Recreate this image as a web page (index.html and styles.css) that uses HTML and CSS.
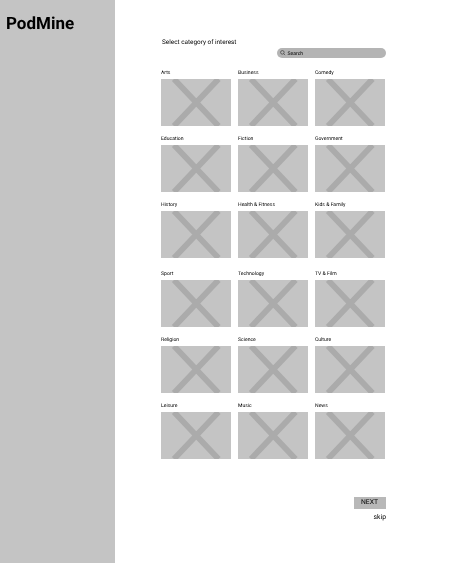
FILE: index.html
```html
<!DOCTYPE html>
<html lang="en">
<head>
<meta charset="utf-8">
<title>PodMine</title>
<link rel="stylesheet" href="styles.css">
</head>
<body>
<svg class="defs" width="0" height="0" aria-hidden="true"><defs>
<symbol id="ph" viewBox="0 0 70 47"><rect width="70" height="47" fill="#c4c4c4"/><path d="M13 0 57.500 47M57.500 0 13 47" stroke="#ababab" stroke-width="5.800" fill="none"/></symbol>
</defs></svg>
<div class="app">
  <aside class="sidebar"><h1 class="logo">PodMine</h1></aside>
  <main class="main">
    <p class="title">Select category of interest</p>
    <div class="search">
      <svg class="search-icon" viewBox="0 0 10 10"><circle cx="4.300" cy="4.300" r="3.300" fill="none" stroke="#222" stroke-width="1"/><path d="M6.700 6.700 9.300 9.300" stroke="#222" stroke-width="1"/></svg>
      <span class="search-label">Search</span>
    </div>
    <div class="grid">
      <section class="card"><h2>Arts</h2><svg class="thumb"><use href="#ph"/></svg></section>
      <section class="card"><h2>Business</h2><svg class="thumb"><use href="#ph"/></svg></section>
      <section class="card"><h2>Comedy</h2><svg class="thumb"><use href="#ph"/></svg></section>
      <section class="card"><h2>Education</h2><svg class="thumb"><use href="#ph"/></svg></section>
      <section class="card"><h2>Fiction</h2><svg class="thumb"><use href="#ph"/></svg></section>
      <section class="card"><h2>Government</h2><svg class="thumb"><use href="#ph"/></svg></section>
      <section class="card"><h2>History</h2><svg class="thumb"><use href="#ph"/></svg></section>
      <section class="card"><h2>Health &amp; Fitness</h2><svg class="thumb"><use href="#ph"/></svg></section>
      <section class="card"><h2>Kids &amp; Family</h2><svg class="thumb"><use href="#ph"/></svg></section>
    </div>
    <div class="grid grid-lower">
      <section class="card"><h2>Sport</h2><svg class="thumb"><use href="#ph"/></svg></section>
      <section class="card"><h2>Technology</h2><svg class="thumb"><use href="#ph"/></svg></section>
      <section class="card"><h2>TV &amp; Film</h2><svg class="thumb"><use href="#ph"/></svg></section>
      <section class="card"><h2>Religion</h2><svg class="thumb"><use href="#ph"/></svg></section>
      <section class="card"><h2>Science</h2><svg class="thumb"><use href="#ph"/></svg></section>
      <section class="card"><h2>Culture</h2><svg class="thumb"><use href="#ph"/></svg></section>
      <section class="card"><h2>Leisure</h2><svg class="thumb"><use href="#ph"/></svg></section>
      <section class="card"><h2>Music</h2><svg class="thumb"><use href="#ph"/></svg></section>
      <section class="card"><h2>News</h2><svg class="thumb"><use href="#ph"/></svg></section>
    </div>
    <div class="actions">
      <div class="next">NEXT</div>
      <div class="skip">skip</div>
    </div>
  </main>
</div>
</body>
</html>
```
FILE: styles.css
```css
* { box-sizing: border-box; }
html, body { margin: 0; height: 100%; background: #fff; overflow: hidden; }
body { font-family: Roboto, "Liberation Sans", sans-serif; color: #000; text-rendering: geometricPrecision; }
.defs { position: absolute; }
.app { display: flex; width: 469px; height: 563px; filter: grayscale(1); }
.sidebar { width: 115px; flex: none; background: #c4c4c4; padding: 14px 6px; }
.logo { margin: 0; font-size: 17px; line-height: 20px; font-weight: 700; }
.main { width: 271px; margin-left: 46px; padding-top: 37px; display: flex; flex-direction: column; }
.title { margin: 0 0 0 1px; font-size: 6.400px; line-height: 10px; color: #000; }
.search { margin: 1px 0 0 116px; width: 109px; height: 9.500px; border-radius: 5px; background: #b4b4b4; display: flex; align-items: center; gap: 2px; padding-left: 3px; font-size: 5.100px; color: #000; }
.search-icon { width: 5.500px; height: 5.500px; flex: none; }
.search-label { padding-top: 2px; }
.grid { margin-top: 8.500px; display: grid; grid-template-columns: repeat(3, 70px); column-gap: 7px; row-gap: 6px; }
.grid-lower { margin-top: 8.800px; }
.card { display: flex; flex-direction: column; }
.card h2 { margin: 0; padding-top: 1px; font-size: 5.100px; line-height: 12px; font-weight: 400; color: #000; }
.thumb { display: block; width: 70px; height: 47px; }
.actions { margin-top: 38.500px; display: flex; flex-direction: column; align-items: flex-end; width: 225px; }
.next { width: 32px; height: 11.500px; background: #b8b8b8; font-size: 6.800px; line-height: 11.500px; padding-left: 7px; color: #000; }
.skip { margin-top: 4px; font-size: 6.800px; line-height: 9px; color: #000; }
```
